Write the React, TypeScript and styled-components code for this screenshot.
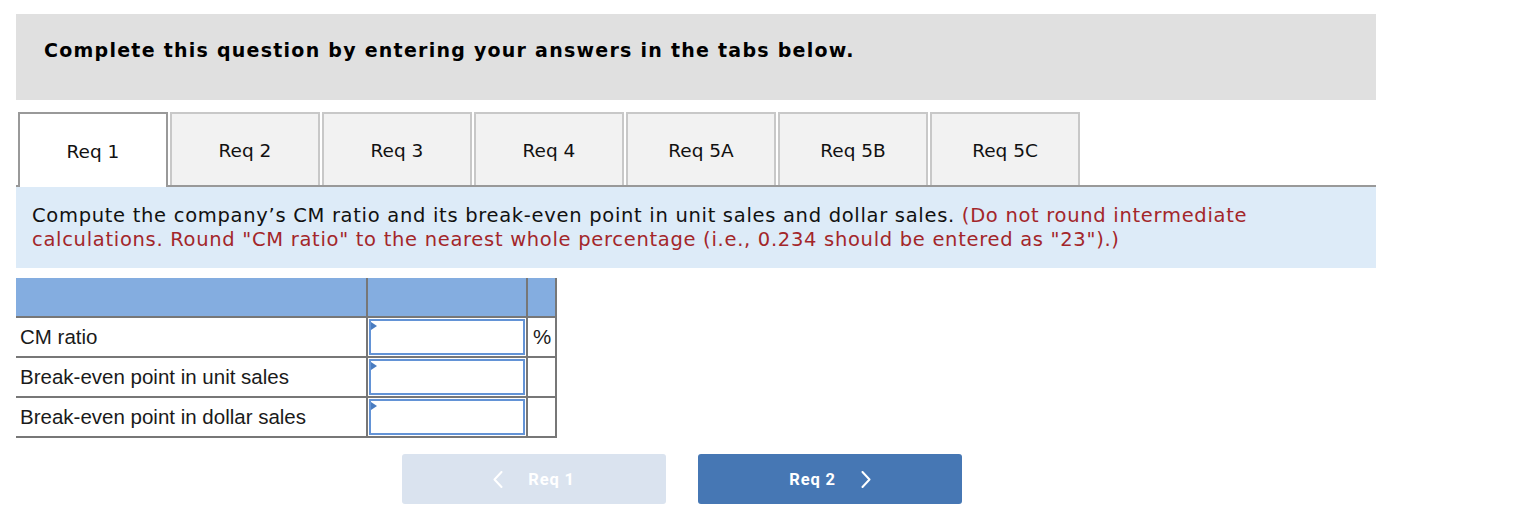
import React from 'react';
import styled, { createGlobalStyle } from 'styled-components';

const GlobalStyle = createGlobalStyle`
  html, body {
    margin: 0;
    padding: 0;
    background: #ffffff;
  }
  body {
    font-family: Verdana, "DejaVu Sans", sans-serif;
    color: #000;
  }
`;

const Page = styled.div`
  padding: 14px 0 0 16px;
  width: 1360px;
`;

const Header = styled.div`
  box-sizing: border-box;
  height: 86px;
  padding: 25px 28px 0;
  background: #e0e0e0;
  font-weight: bold;
  font-size: 19px;
  letter-spacing: 1.25px;
  line-height: 23px;
`;

const TabBar = styled.div`
  display: flex;
  align-items: flex-end;
  gap: 2px;
  margin-top: 12px;
  padding-left: 2px;
  border-bottom: 2px solid #999999;
`;

const Tab = styled.div<{ $active?: boolean }>`
  box-sizing: border-box;
  width: 150px;
  height: ${(p) => (p.$active ? '75px' : '73px')};
  margin-bottom: ${(p) => (p.$active ? '-2px' : '0')};
  display: flex;
  align-items: center;
  justify-content: center;
  padding-top: 2px;
  border: 2px solid ${(p) => (p.$active ? '#999999' : '#c8c8c8')};
  border-bottom: none;
  background: ${(p) => (p.$active ? '#ffffff' : '#f2f2f2')};
  font-size: 18.5px;
  color: #111;
`;

const Instructions = styled.div`
  padding: 17px 16px 16px;
  background: #ddebf8;
  font-size: 19.5px;
  letter-spacing: 0.7px;
  line-height: 24px;
  color: #111;
`;

const Note = styled.span`
  color: #a3262a;
`;

const AnswerTable = styled.table`
  margin-top: 10px;
  border-collapse: separate;
  border-spacing: 0;
  font-family: "Liberation Sans", Arial, sans-serif;
  font-size: 20.5px;
  color: #1a1a1a;
`;

const HeadCell = styled.th<{ $w: number }>`
  box-sizing: border-box;
  width: ${(p) => p.$w}px;
  height: 40px;
  padding: 0;
  background: #84ade0;
  border-right: 2px solid #777777;
  border-bottom: 2px solid #777777;
`;

const LabelCell = styled.td`
  box-sizing: border-box;
  height: 40px;
  padding: 0 0 0 4px;
  border-right: 2px solid #777777;
  border-bottom: 2px solid #777777;
  white-space: nowrap;
`;

const InputCell = styled.td`
  box-sizing: border-box;
  padding: 1px;
  border-right: 2px solid #777777;
  border-bottom: 2px solid #777777;
`;

const UnitCell = styled.td`
  box-sizing: border-box;
  padding: 0 0 0 5px;
  border-right: 2px solid #777777;
  border-bottom: 2px solid #777777;
`;

const InputBox = styled.div`
  position: relative;
  box-sizing: border-box;
  height: 36px;
  border: 2px solid #6393d6;
  background: #ffffff;

  &::before {
    content: '';
    position: absolute;
    left: 0;
    top: 1px;
    border-left: 6px solid #4a7cc0;
    border-top: 4px solid transparent;
    border-bottom: 4px solid transparent;
  }
`;

const Nav = styled.div`
  display: flex;
  gap: 32px;
  margin-top: 16px;
  padding-left: 386px;
`;

const NavButton = styled.button<{ $disabled?: boolean }>`
  box-sizing: border-box;
  width: 264px;
  height: 50px;
  display: flex;
  align-items: center;
  justify-content: center;
  gap: 25px;
  border: none;
  border-radius: 3px;
  background: ${(p) => (p.$disabled ? '#dae3ef' : '#4677b4')};
  color: #ffffff;
  font-family: Roboto, "Liberation Sans", sans-serif;
  font-weight: 700;
  font-size: 16.5px;
  letter-spacing: 0.8px;
  cursor: ${(p) => (p.$disabled ? 'default' : 'pointer')};
`;

const Chevron = ({ dir }: { dir: 'left' | 'right' }) => (
  <svg width="10" height="17" viewBox="0 0 10 17" fill="none">
    <polyline
      points={dir === 'left' ? '8.5,1 1.5,8.5 8.5,16' : '1.5,1 8.5,8.5 1.5,16'}
      stroke="#ffffff"
      strokeWidth="2"
      strokeLinecap="round"
      strokeLinejoin="round"
    />
  </svg>
);

const tabs = ['Req 1', 'Req 2', 'Req 3', 'Req 4', 'Req 5A', 'Req 5B', 'Req 5C'];

const rows = [
  { label: 'CM ratio', unit: '%' },
  { label: 'Break-even point in unit sales', unit: '' },
  { label: 'Break-even point in dollar sales', unit: '' },
];

export default function App() {
  return (
    <Page>
      <GlobalStyle />
      <Header>Complete this question by entering your answers in the tabs below.</Header>

      <TabBar>
        {tabs.map((t, i) => (
          <Tab key={t} $active={i === 0}>
            {t}
          </Tab>
        ))}
      </TabBar>

      <Instructions>
        Compute the company’s CM ratio and its break-even point in unit sales and dollar sales.{' '}
        <Note>
          (Do not round intermediate calculations. Round "CM ratio" to the nearest whole percentage
          (i.e., 0.234 should be entered as "23").)
        </Note>
      </Instructions>

      <AnswerTable>
        <thead>
          <tr>
            <HeadCell $w={352} />
            <HeadCell $w={160} />
            <HeadCell $w={29} />
          </tr>
        </thead>
        <tbody>
          {rows.map((r) => (
            <tr key={r.label}>
              <LabelCell>{r.label}</LabelCell>
              <InputCell>
                <InputBox />
              </InputCell>
              <UnitCell>{r.unit}</UnitCell>
            </tr>
          ))}
        </tbody>
      </AnswerTable>

      <Nav>
        <NavButton $disabled>
          <Chevron dir="left" />
          <span>Req 1</span>
        </NavButton>
        <NavButton>
          <span>Req 2</span>
          <Chevron dir="right" />
        </NavButton>
      </Nav>
    </Page>
  );
}
